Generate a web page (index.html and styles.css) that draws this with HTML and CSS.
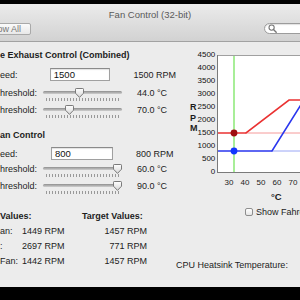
FILE: index.html
```html
<!DOCTYPE html>
<html>
<head>
<meta charset="utf-8">
<link rel="stylesheet" href="styles.css">
</head>
<body>
<div class="topbar"></div>
<div class="toolbar">
  <div class="title">Fan Control (32-bit)</div>
  <div class="tools">
    <div class="showall">ow All</div>
    <div class="search">
      <svg width="9" height="9" viewBox="0 0 9 9"><circle cx="3.6" cy="3.6" r="2.6" fill="none" stroke="#777" stroke-width="1.1"/><line x1="5.5" y1="5.5" x2="8.2" y2="8.2" stroke="#777" stroke-width="1.4" stroke-linecap="round"/></svg>
    </div>
  </div>
</div>
<div class="content">
  <div class="left">
    <div class="hdr">e Exhaust Control (Combined)</div>
    <div class="frow frow1"><span class="lbl-f">eed:</span><div class="field">1500</div><span class="fval">1500 RPM</span></div>
    <div class="srow srow1"><span class="lbl-s">hreshold:</span><div class="slider"><div class="track"></div><div class="ticks"></div><svg class="thumb" style="left:31.5px" width="9" height="10" viewBox="0 0 9 10"><defs><linearGradient id="tg" x1="0" y1="0" x2="0" y2="1"><stop offset="0" stop-color="#ffffff"/><stop offset="1" stop-color="#d6d6d6"/></linearGradient></defs><path d="M1.2 0.5H7.8Q8.5 0.5 8.5 1.2V5.2L4.5 9.4L0.5 5.2V1.2Q0.5 0.5 1.2 0.5Z" fill="url(#tg)" stroke="#7a7a7a"/></svg></div><span class="sval">44.0 °C</span></div>
    <div class="srow"><span class="lbl-s">hreshold:</span><div class="slider"><div class="track"></div><div class="ticks"></div><svg class="thumb" style="left:21.5px" width="9" height="10" viewBox="0 0 9 10"><path d="M1.2 0.5H7.8Q8.5 0.5 8.5 1.2V5.2L4.5 9.4L0.5 5.2V1.2Q0.5 0.5 1.2 0.5Z" fill="url(#tg)" stroke="#7a7a7a"/></svg></div><span class="sval">70.0 °C</span></div>

    <div class="hdr hdr2">an Control</div>
    <div class="frow frow2"><span class="lbl-f">eed:</span><div class="field">800</div><span class="fval">800 RPM</span></div>
    <div class="srow"><span class="lbl-s">hreshold:</span><div class="slider"><div class="track"></div><div class="ticks"></div><svg class="thumb" style="left:69.5px" width="9" height="10" viewBox="0 0 9 10"><path d="M1.2 0.5H7.8Q8.5 0.5 8.5 1.2V5.2L4.5 9.4L0.5 5.2V1.2Q0.5 0.5 1.2 0.5Z" fill="url(#tg)" stroke="#7a7a7a"/></svg></div><span class="sval">60.0 °C</span></div>
    <div class="srow"><span class="lbl-s">hreshold:</span><div class="slider"><div class="track"></div><div class="ticks"></div><svg class="thumb" style="left:69.5px" width="9" height="10" viewBox="0 0 9 10"><path d="M1.2 0.5H7.8Q8.5 0.5 8.5 1.2V5.2L4.5 9.4L0.5 5.2V1.2Q0.5 0.5 1.2 0.5Z" fill="url(#tg)" stroke="#7a7a7a"/></svg></div><span class="sval">90.0 °C</span></div>

    <div class="values">
      <div class="vh">Values:</div><div></div><div class="vh">Target Values:</div>
      <div class="vl">an:</div><div class="vc">1449 RPM</div><div class="vt">1457 RPM</div>
      <div class="vl">:</div><div class="vc">2697 RPM</div><div class="vt">771 RPM</div>
      <div class="vl vl3">Fan:</div><div class="vc">1442 RPM</div><div class="vt">1457 RPM</div>
    </div>
  </div>

  <div class="right">
    <div class="chart">
      <div class="rpm"><div>R</div><div>P</div><div>M</div></div>
      <div class="ylabels">
        <div>4500</div><div>4000</div><div>3500</div><div>3000</div><div>2500</div><div>2000</div><div>1500</div><div>1000</div><div>500</div><div>0</div>
      </div>
      <svg class="plot" width="100" height="118" viewBox="0 0 100 118">
        <rect x="0" y="0" width="100" height="118" fill="#fff"/>
        <line x1="0" y1="0.5" x2="100" y2="0.5" stroke="#a0a0a0"/>
        <line x1="0.5" y1="0" x2="0.5" y2="118" stroke="#7a7a7a"/>
        <line x1="0" y1="117.5" x2="100" y2="117.5" stroke="#7a7a7a"/>
        <line x1="17" y1="1" x2="17" y2="117" stroke="#a8ee98" stroke-width="2"/>
        <line x1="28" y1="78" x2="100" y2="78" stroke="#f59a9a" stroke-width="1"/>
        <line x1="54" y1="96" x2="100" y2="96" stroke="#9aa6f5" stroke-width="1"/>
        <polyline points="1,78 29,78 72,45 100,45" fill="none" stroke="#ea3232" stroke-width="1.6"/>
        <polyline points="1,96 55,96 102,21" fill="none" stroke="#2a36ee" stroke-width="1.6"/>
        <circle cx="17" cy="78" r="3.4" fill="#9e0e0e"/>
        <circle cx="17" cy="96" r="3.4" fill="#1236ff"/>
      </svg>
    </div>
    <div class="xlabels"><span>30</span><span>40</span><span>50</span><span>60</span><span>70</span></div>
    <div class="xunit">°C</div>
    <div class="check"><span class="box"></span><span>Show Fahrenheit</span></div>
    <div class="cpu">CPU Heatsink Temperature:</div>
  </div>
</div>
<div class="bottombar"></div>
</body>
</html>
```
FILE: styles.css
```css
* { box-sizing: border-box; margin: 0; padding: 0; }
html, body { width: 300px; height: 300px; overflow: hidden; background: #000; }
body { font-family: "Liberation Sans", Arial, sans-serif; font-size: 9px; color: #1c1c1c; }

.topbar { height: 4px; background: #000; }
.toolbar { height: 38px; background: linear-gradient(#ebebeb, #d2d2d2); border-bottom: 1px solid #a2a2a2; padding-top: 3px; }
.title { text-align: center; font-size: 9.5px; line-height: 15px; color: #5a5a5a; }
.tools { display: flex; justify-content: space-between; margin-top: 1px; height: 12px; }
.showall { margin-left: -8px; width: 39px; height: 12px; border: 1px solid #a9a9a9; border-radius: 2px; background: linear-gradient(#fbfbfb, #e8e8e8); color: #777; text-align: right; padding-right: 9px; line-height: 10px; }
.search { margin-right: -30px; width: 66px; height: 11px; border: 1px solid #9c9c9c; border-radius: 6px; background: #fff; display: flex; align-items: center; padding-left: 3px; box-shadow: inset 0 1px 1px rgba(0,0,0,.12); }

.content { height: 245px; background: #ececec; display: grid; grid-template-columns: 176px 124px; overflow: hidden; }
.bottombar { height: 13px; background: #000; }

.left { padding-top: 7px; }
.hdr { font-weight: bold; line-height: 12px; height: 12px; white-space: nowrap; }
.hdr2 { margin-top: 11px; }

.frow { display: flex; align-items: center; height: 13px; white-space: nowrap; }
.frow1 { margin-top: 7px; }
.frow2 { margin-top: 6px; }
.lbl-f { width: 51px; }
.field { width: 62px; height: 13px; border: 1px solid #a0a0a0; border-top-color: #8a8a8a; background: #fff; box-shadow: inset 0 1px 1px rgba(0,0,0,.12); font-size: 9.5px; line-height: 11px; padding-left: 3px; color: #111; }
.fval { margin-left: 23px; }

.srow { display: flex; align-items: center; height: 17px; white-space: nowrap; }
.srow1 { margin-top: 3px; }
.lbl-s { width: 43px; }
.slider { position: relative; width: 79px; height: 17px; display: flex; flex-direction: column; padding-top: 7px; }
.track { height: 3px; border-radius: 2px; background: linear-gradient(#8e8e8e, #cfcfcf); }
.ticks { margin: 4px 3px 0 3px; height: 3px; background: repeating-linear-gradient(90deg, #999 0 1px, transparent 1px 3px); }
.thumb { position: absolute; top: 4px; }
.sval { margin-left: 15px; }

.values { margin-top: 16px; display: grid; grid-template-columns: 22px 60px 65px; grid-template-rows: 12px 15px 15px 15px; align-items: center; white-space: nowrap; }
.vh { font-weight: bold; }
.vl, .vc, .vt { line-height: 15px; }
.vt { text-align: right; }
.values > div:nth-child(n+4) { position: relative; top: 2px; }

.right { display: flex; flex-direction: column; white-space: nowrap; }
.chart { display: flex; height: 130px; margin-top: 6px; }
.rpm { width: 24px; padding-left: 14px; padding-top: 54px; font-weight: bold; line-height: 10.5px; font-size: 9px; }
.ylabels { width: 21px; text-align: right; font-size: 8px; color: #111; }
.ylabels div { height: 13px; line-height: 13px; }
.plot { margin-top: 7px; margin-left: 2px; flex: none; }

.xlabels { display: flex; padding-left: 45px; height: 10px; line-height: 10px; font-size: 8px; }
.xlabels span { width: 16px; text-align: center; flex: none; }
.xunit { margin-top: 2px; height: 14px; line-height: 14px; padding-left: 95px; font-weight: bold; font-size: 9.5px; }
.check { margin-top: 1px; height: 14px; display: flex; align-items: center; gap: 3px; padding-left: 69px; }
.box { width: 8px; height: 8px; border: 1px solid #8e8e8e; border-radius: 2px; background: linear-gradient(#fff, #e6e6e6); flex: none; }
.cpu { margin-top: 40px; height: 12px; line-height: 12px; }
```
